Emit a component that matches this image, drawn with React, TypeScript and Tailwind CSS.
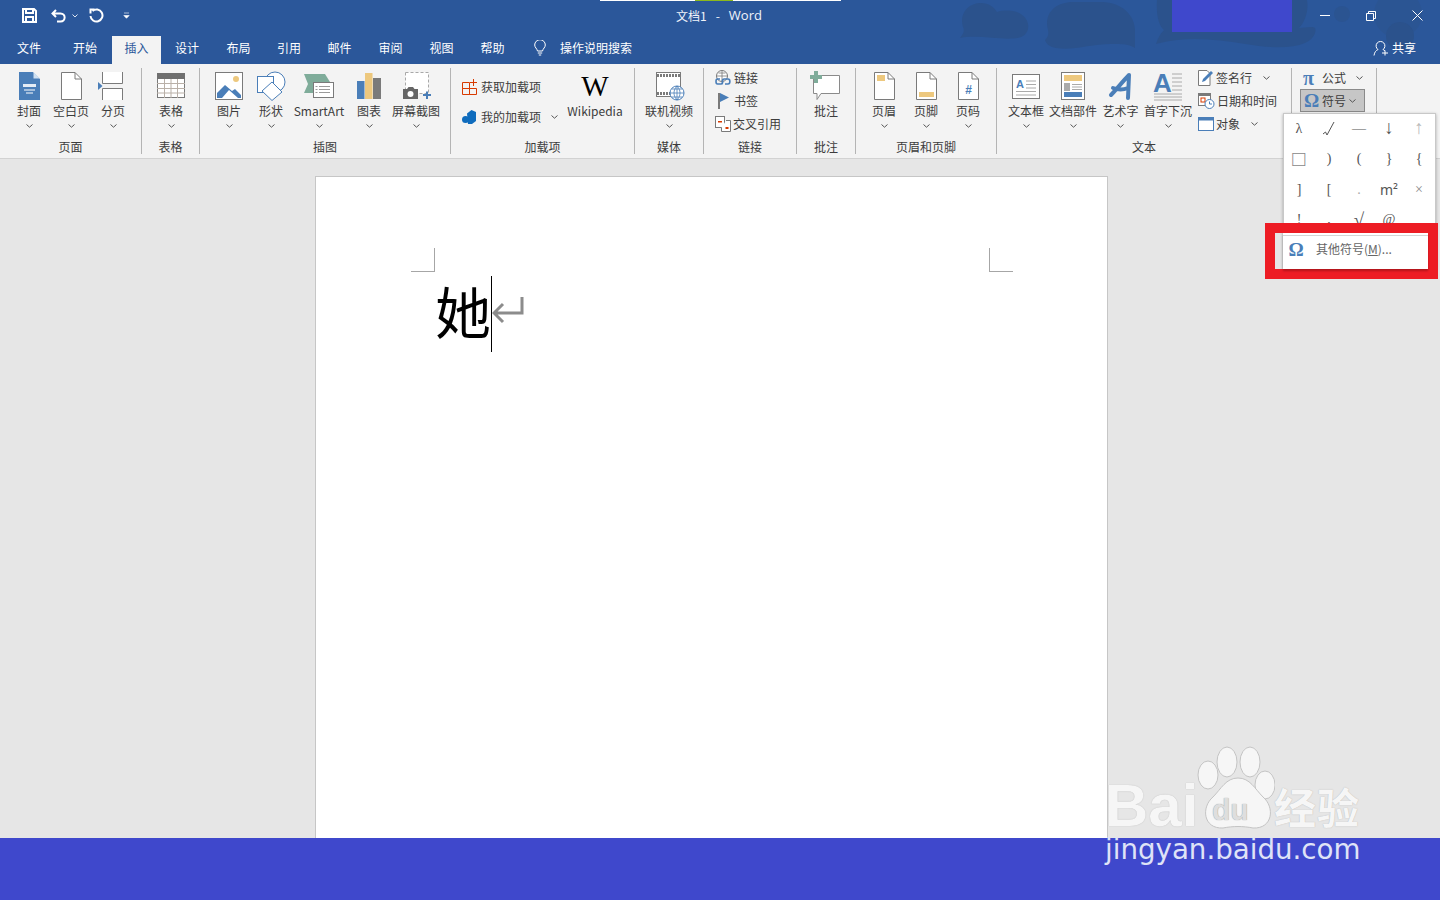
import type { ReactNode } from "react";

const font = { fontFamily: '"Noto Sans CJK SC", "Noto Sans", sans-serif' };
const serif = { fontFamily: '"Liberation Serif", serif' };
const arial = { fontFamily: '"Liberation Sans", sans-serif' };

const BLUE = "#4a7eb8";
const GRAY = "#7a7a7a";
const YEL = "#edc87e";

function Svg({ w, h, children }: { w: number; h: number; children: ReactNode }) {
    return (
        <svg width={w} height={h} viewBox={`0 0 ${w} ${h}`} className="shrink-0 block overflow-visible">
            {children}
        </svg>
    );
}

function Chevron({ className = "" }: { className?: string }) {
    return (
        <svg width="7" height="4" viewBox="0 0 7 4" className={`shrink-0 ${className}`}>
            <path d="M.5.5 3.5 3.2 6.5.5" fill="none" stroke="#555" strokeWidth="1" />
        </svg>
    );
}

function Doc({ children }: { children?: ReactNode }) {
    return (
        <Svg w={21} h={28}>
            <path d="M.5.5H14L20.5 7V27.5H.5Z" fill="#fff" stroke={GRAY} />
            <path d="M14 .5V7H20.5" fill="none" stroke={GRAY} />
            {children}
        </Svg>
    );
}

function BigButton({ w, label, icon, arrow = true }: { w: number; label: string; icon: ReactNode; arrow?: boolean }) {
    return (
        <div className="flex flex-col items-center shrink-0" style={{ width: w }}>
            <div className="h-[32px] flex items-center justify-center">{icon}</div>
            <div className="h-[16px] mt-[1px] leading-[16px] whitespace-nowrap">{label}</div>
            <div className="h-[14px] flex items-center">{arrow && <Chevron />}</div>
        </div>
    );
}

function Group({ w, label, pl = 0, children }: { w: number; label: string; pl?: number; children: ReactNode }) {
    return (
        <div className="h-[86px] shrink-0 flex flex-col border-r border-[#b4b4b4]" style={{ width: w }}>
            <div className="flex-1 flex pt-[2px]" style={{ paddingLeft: pl }}>
                {children}
            </div>
            <div className="h-[14px] leading-[14px] text-center whitespace-nowrap">{label}</div>
        </div>
    );
}

function SmallRow({ icon, label, arrow, gap = 3 }: { icon: ReactNode; label: string; arrow?: boolean; gap?: number }) {
    return (
        <div className="h-[20px] flex items-center whitespace-nowrap">
            <div className="w-[18px] flex justify-center shrink-0">{icon}</div>
            <span style={{ marginLeft: gap }}>{label}</span>
            {arrow && <Chevron className="ml-auto" />}
        </div>
    );
}

const tabs: [string, number][] = [
    ["文件", 58],
    ["开始", 54],
    ["插入", 49],
    ["设计", 52],
    ["布局", 51],
    ["引用", 50],
    ["邮件", 51],
    ["审阅", 51],
    ["视图", 51],
    ["帮助", 51],
];

const checkMark = (
    <svg width="14" height="16" viewBox="0 0 14 16">
        <path d="M1 14 3.500 12 5 15 12 2" fill="none" stroke="#555" strokeWidth="1" />
    </svg>
);

const symbols: { s: ReactNode; c?: string }[] = [
    { s: "λ" },
    { s: checkMark },
    { s: "—", c: "text-[#333]" },
    { s: "↓", c: "text-[#333] text-[19px]" },
    { s: "↑", c: "text-[#bbb] text-[19px]" },
    { s: "□", c: "text-[#888] text-[22px]" },
    { s: ")" },
    { s: "(" },
    { s: "}" },
    { s: "{" },
    { s: "]" },
    { s: "[" },
    { s: ".", c: "text-[#aaa]" },
    { s: "m²", c: "text-[14px] [font-family:'Noto_Sans',sans-serif]" },
    { s: "×", c: "text-[#888]" },
    { s: "!" },
    { s: "," },
    { s: "√", c: "text-[19px]" },
    { s: "@" },
    { s: "" },
];

export default function App() {
    return (
        <div className="w-[1440px] h-[900px] relative overflow-hidden flex flex-col text-[12px] text-[#3c3c3c] bg-[#e6e6e6]" style={font}>
            {/* title + tabs */}
            <div className="h-[64px] shrink-0 bg-[#2b579a] relative text-white">
                <svg width="1440" height="64" viewBox="0 0 1440 64" className="absolute inset-0">
                    <g fill="#2b528c">
                        <path d="M960 38c3-4 5-7 3-11-4-12 4-24 18-24 8 0 13 4 16 9 6-2 16-2 22 1 12 6 12 20 2 24-14 5-40-3-61 1Z" />
                        <path d="M1045 40c3-3 4-6 3-10-4-14 4-27 24-28h30c20 0 33 14 33 28l0 18c-6-4-12-4-24-4-20 0-38 7-55 4-6-1-10-4-11-8Z" />
                        <path d="M1156 44c2-6 4-10 8-14-6-5-8-18-7-30h150c2 10-2 22-8 28 4 0 14-2 16 0 2 4-2 12-10 15-14 6-36 5-60 1-30-5-60-8-89 0Z" />
                        <circle cx="1342" cy="14" r="8" fill="#2b5491" />
                        <circle cx="1398" cy="14" r="24" fill="#2b5593" />
                        <circle cx="1400" cy="36" r="14" />
                    </g>
                </svg>
                {/* colored strip left by the capture at the top */}
                <div className="absolute left-[600px] top-0 w-[241px] h-px bg-white" />
                <div className="absolute left-[695px] top-0 w-[38px] h-px bg-[#8cb81c]" />
                <div className="absolute left-[1172px] top-0 w-[120px] h-[32px] bg-[#3f48cc]" />

                <div className="h-[36px] flex items-center relative pb-[5px]">
                    <div className="w-[676px] shrink-0 flex items-center pl-[22px]">
                        <svg width="15" height="15" viewBox="0 0 15 15">
                            <path d="M1 1H12L14 3V14H1Z M4 1V5H11V1 M4 14V9H11V14" fill="none" stroke="#fff" strokeWidth="2" />
                        </svg>
                        <svg width="15" height="14" viewBox="0 0 15 14" className="ml-[14px]">
                            <path d="M5 1 1.500 4.500 5 8M2 4.500H9.500C15 4.500 15 12.500 9.500 12.500H6" fill="none" stroke="#fff" strokeWidth="2" />
                        </svg>
                        <svg width="6" height="4" viewBox="0 0 6 4" className="ml-[6px]">
                            <path d="M.5.5 3 3 5.500.5" fill="none" stroke="#dfe7f2" />
                        </svg>
                        <svg width="15" height="15" viewBox="0 0 15 15" className="ml-[11px]">
                            <path d="M3.500 3A6 6 0 1 1 1.500 8M1.500 5.500V1.500H5.500" fill="none" stroke="#fff" strokeWidth="2" />
                        </svg>
                        <svg width="7" height="7" viewBox="0 0 7 7" className="ml-[19px]">
                            <path d="M1 1H6M.8 3.500H6.200L3.500 6.300Z" fill="#fff" stroke="#fff" strokeWidth=".6" />
                        </svg>
                    </div>
                    <div className="flex items-center whitespace-nowrap text-[#f0f4fa]">
                        <span>文档1</span>
                        <span className="ml-[9px]">-</span>
                        <span className="ml-[9px] text-[13px]" style={{ fontFamily: '"Open Sans", sans-serif' }}>Word</span>
                    </div>
                    <div className="flex-1 flex items-center justify-end">
                        <div className="w-[46px] flex justify-center">
                            <div className="w-[10px] h-px bg-white" />
                        </div>
                        <div className="w-[46px] flex justify-center">
                            <svg width="10" height="10" viewBox="0 0 10 10">
                                <path d="M.5 2.500H7.500V9.500H.5ZM2.500 2.500V.5H9.500V7.500H7.500" fill="none" stroke="#fff" />
                            </svg>
                        </div>
                        <div className="w-[46px] flex justify-center">
                            <svg width="11" height="11" viewBox="0 0 11 11">
                                <path d="M.5.5 10.500 10.500M10.500.5.5 10.500" stroke="#fff" />
                            </svg>
                        </div>
                    </div>
                </div>

                <div className="h-[28px] flex relative">
                    {tabs.map(([t, w]) => (
                        <div
                            key={t}
                            style={{ width: w }}
                            className={`flex items-center justify-center pb-[4px] ${t === "插入" ? "bg-[#f3f3f3] text-[#2b579a]" : ""}`}
                        >
                            {t}
                        </div>
                    ))}
                    <div className="flex items-center pb-[4px] ml-[16px]">
                        <svg width="12" height="16" viewBox="0 0 12 16">
                            <path d="M3.500 11C3 8.500.7 7.500.7 5a5.300 5.300 0 0 1 10.600 0c0 2.500-2.300 3.500-2.800 6ZM3.800 13H8.200M4.800 15H7.200" fill="none" stroke="#fff" strokeWidth="1" />
                        </svg>
                        <span className="ml-[14px]">操作说明搜索</span>
                    </div>
                    <div className="ml-auto flex items-center pb-[4px] pr-[24px]">
                        <svg width="16" height="16" viewBox="0 0 16 16">
                            <path d="M1 15.500C1.500 12 3 10.500 5 9.500A4.400 4.400 0 1 1 10 9.500C10.800 9.900 11.500 10.300 12 11M9 13H15M12 10.500V15.500" fill="none" stroke="#fff" strokeWidth="1" />
                        </svg>
                        <span className="ml-[3px]">共享</span>
                    </div>
                </div>
            </div>

            {/* ribbon */}
            <div className="h-[95px] shrink-0 bg-[#f3f3f3] border-b border-[#d2d2d2] pt-[4px] flex">
                <Group w={142} label="页面" pl={8}>
                    <BigButton
                        w={42}
                        label="封面"
                        icon={
                            <Svg w={21} h={28}>
                                <path d="M0 0H14L21 7V28H0Z" fill={BLUE} />
                                <path d="M14.500 0V6.500H21" fill="#cfe0f1" />
                                <path d="M4 12H17V15H4Z" fill="#fff" opacity=".85" />
                                <path d="M5 18H16M7 21H14" stroke="#fff" />
                            </Svg>
                        }
                    />
                    <BigButton w={42} label="空白页" icon={<Doc />} />
                    <BigButton
                        w={42}
                        label="分页"
                        icon={
                            <div className="mr-[4px]">
                                <Svg w={26} h={28}>
                                    <path d="M4.500 0V11.500H24.500V0M4.500 28V16.500H24.500V28" fill="#fff" stroke={GRAY} />
                                    <path d="M0 10 4.500 14 0 18Z" fill={BLUE} />
                                </Svg>
                            </div>
                        }
                    />
                </Group>
                <Group w={58} label="表格" pl={8}>
                    <BigButton
                        w={42}
                        label="表格"
                        icon={
                            <Svg w={28} h={26}>
                                <rect x=".5" y=".5" width="27" height="24" fill="#fff" stroke={GRAY} />
                                <rect width="28" height="6" fill="#6f6f6f" />
                                <path d="M0 10.500H28M0 15.500H28M0 20H28M7.500 6V25M14 6V25M20.500 6V25" stroke="#b9b0a8" />
                            </Svg>
                        }
                    />
                </Group>
                <Group w={251} label="插图" pl={8}>
                    <BigButton
                        w={42}
                        label="图片"
                        icon={
                            <Svg w={28} h={28}>
                                <rect x=".5" y=".5" width="27" height="27" fill="#fff" stroke={GRAY} />
                                <circle cx="21" cy="7" r="3" fill={YEL} />
                                <path d="M2 26V21L10 13 17 19 20 17 26 23V26H23L14 18 7 26Z" fill={BLUE} />
                            </Svg>
                        }
                    />
                    <BigButton
                        w={42}
                        label="形状"
                        icon={
                            <Svg w={30} h={30}>
                                <circle cx="19" cy="11" r="10" fill="#fff" stroke={BLUE} />
                                <rect x="1.500" y="5.500" width="16" height="16" fill="#fff" stroke={BLUE} />
                                <path d="M16 11 26 21 16 29.500 6 20Z" fill="#fff" stroke={BLUE} />
                            </Svg>
                        }
                    />
                    <BigButton
                        w={54}
                        label="SmartArt"
                        icon={
                            <Svg w={30} h={24}>
                                <path d="M0 0H21L26 8H12L9 11 12 19H0L4 10Z" fill="#7fac9a" />
                                <rect x="9.500" y="8.500" width="20" height="15" fill="#fff" stroke={GRAY} />
                                <path d="M15 12.500H26M15 15.500H26M15 18.500H26M11.500 12.500H13.500M11.500 15.500H13.500M11.500 18.500H13.500" stroke="#9a9a9a" />
                            </Svg>
                        }
                    />
                    <BigButton
                        w={46}
                        label="图表"
                        icon={
                            <Svg w={24} h={26}>
                                <rect y="8" width="7.500" height="18" fill={BLUE} />
                                <rect x="8" width="7.500" height="26" fill={YEL} />
                                <rect x="16" y="5" width="8" height="21" fill={GRAY} />
                            </Svg>
                        }
                    />
                    <BigButton
                        w={48}
                        label="屏幕截图"
                        icon={
                            <Svg w={29} h={28}>
                                <rect x="3.500" y=".5" width="23" height="21" fill="#fff" stroke="#a8a8a8" strokeDasharray="3 2" />
                                <path d="M1 17H5L6.500 15H11L12.500 17H16V27H1Z" fill="#666" />
                                <circle cx="8.500" cy="22" r="3" fill="#fff" />
                                <path d="M21 23H29M25 19.500V27" stroke={BLUE} strokeWidth="2" />
                            </Svg>
                        }
                    />
                </Group>
                <Group w={184} label="加载项">
                    <div className="w-[108px] shrink-0 pl-[9px] flex flex-col gap-[10px] pt-[7px]">
                        <SmallRow
                            gap={3}
                            label="获取加载项"
                            icon={
                                <Svg w={15} h={16}>
                                    <path d="M.5 3.500H7.500V9.500H.5ZM.5 9.500H7.500V15.500H.5ZM7.500 9.500H14.500V15.500H7.500ZM8 3.500H15M11.500 0V7" fill="none" stroke="#d83b01" />
                                </Svg>
                            }
                        />
                        <div className="h-[20px] flex items-center whitespace-nowrap">
                            <div className="w-[18px] flex justify-center shrink-0">
                                <Svg w={15} h={14}>
                                    <path d="M5 3.500 9.500 0 14 2V11L10 14H6Z" fill="#0f6cbd" />
                                    <circle cx="3.500" cy="9.500" r="3.500" fill="#0f6cbd" />
                                </Svg>
                            </div>
                            <span className="ml-[3px]">我的加载项</span>
                            <Chevron className="ml-[10px]" />
                        </div>
                    </div>
                    <div className="flex-1">
                        <BigButton
                            w={72}
                            label="Wikipedia"
                            arrow={false}
                            icon={<span className="text-[29px] leading-[32px] text-black" style={serif}>W</span>}
                        />
                    </div>
                </Group>
                <Group w={69} label="媒体" pl={8}>
                    <BigButton
                        w={52}
                        label="联机视频"
                        icon={
                            <div className="ml-[2px]">
                                <Svg w={29} h={29}>
                                    <rect x=".5" y=".5" width="24" height="24" fill="#fff" stroke={GRAY} />
                                    <path d="M1 3.500H24M1 21.500H24" stroke={GRAY} strokeWidth="3" strokeDasharray="2 1" />
                                    <circle cx="21" cy="21" r="7" fill="#fff" stroke={BLUE} />
                                    <path d="M14 21H28M21 14V28M16 17H26M16 25H26M21 14C17 18 17 24 21 28M21 14C25 18 25 24 21 28" fill="none" stroke={BLUE} strokeWidth=".8" />
                                </Svg>
                            </div>
                        }
                    />
                </Group>
                <Group w={93} label="链接" pl={10}>
                    <div className="flex flex-col gap-[3px] w-full -mt-[2px]">
                        <SmallRow
                            gap={2}
                            label="链接"
                            icon={
                                <Svg w={16} h={16}>
                                    <circle cx="7" cy="6" r="5.500" fill="#fff" stroke={GRAY} />
                                    <path d="M1.500 6H12.500M7 .5V11.500M3.500 3H10.500" stroke={GRAY} strokeWidth=".8" />
                                    <path d="M5 9H2.500C.5 9 .5 14 2.500 14H6C8 14 8 11 7 11M10 14H13C15.500 14 15.500 9 13 9H9C7 9 7 12 8 12" fill="none" stroke={BLUE} strokeWidth="1.600" />
                                </Svg>
                            }
                        />
                        <SmallRow
                            gap={2}
                            label="书签"
                            icon={
                                <Svg w={13} h={16}>
                                    <rect x="1" width="2" height="16" fill={GRAY} />
                                    <path d="M3 0 12 4.500 3 9Z" fill={BLUE} />
                                </Svg>
                            }
                        />
                        <SmallRow
                            gap={1}
                            label="交叉引用"
                            icon={
                                <Svg w={17} h={16}>
                                    <rect x=".5" y=".5" width="9" height="11" fill="#fff" stroke={GRAY} />
                                    <path d="M11 4.500H15.500V15.500H6.500V12" fill="#fff" stroke={GRAY} />
                                    <rect x="3" y="5" width="4" height="1.500" fill="#d83b01" />
                                    <rect x="10.500" y="11" width="3" height="2" fill="#d83b01" />
                                </Svg>
                            }
                        />
                    </div>
                </Group>
                <Group w={59} label="批注" pl={5}>
                    <BigButton
                        w={48}
                        label="批注"
                        arrow={false}
                        icon={
                            <div className="mr-[4px]">
                                <Svg w={31} h={30}>
                                    <path d="M4.500 4.500H30.500V22.500H12L8 28.500V22.500H4.500Z" fill="#fff" stroke="#8a8a8a" strokeLinejoin="round" />
                                    <path d="M5 0H9V4H13V8H9V12H5V8H1V4H5Z" fill="#7fac9a" />
                                </Svg>
                            </div>
                        }
                    />
                </Group>
                <Group w={141} label="页眉和页脚" pl={7}>
                    <BigButton
                        w={42}
                        label="页眉"
                        icon={
                            <Doc>
                                <rect x="3" y="3" width="8" height="6" fill={YEL} />
                            </Doc>
                        }
                    />
                    <BigButton
                        w={42}
                        label="页脚"
                        icon={
                            <Doc>
                                <rect x="3" y="20" width="15" height="5" fill={YEL} />
                            </Doc>
                        }
                    />
                    <BigButton
                        w={42}
                        label="页码"
                        icon={
                            <Doc>
                                <text x="10.500" y="22" textAnchor="middle" fontSize="12" fontWeight="700" fill={BLUE} style={arial}>
                                    #
                                </text>
                            </Doc>
                        }
                    />
                </Group>
                <Group w={295} label="文本" pl={6}>
                    <BigButton
                        w={46}
                        label="文本框"
                        icon={
                            <Svg w={28} h={25}>
                                <rect x=".5" y=".5" width="27" height="24" fill="#fff" stroke={GRAY} />
                                <text x="4" y="14" fontSize="11" fontWeight="700" fill={BLUE} style={arial}>
                                    A
                                </text>
                                <path d="M14 7H24M14 10.500H24M14 14H24M4 17.500H24M4 21H24" stroke="#aaa" />
                            </Svg>
                        }
                    />
                    <BigButton
                        w={48}
                        label="文档部件"
                        icon={
                            <Svg w={24} h={28}>
                                <rect x=".5" y=".5" width="23" height="27" fill="#fff" stroke={GRAY} />
                                <rect x="3" y="3" width="18" height="6" fill={YEL} />
                                <rect x="3" y="11" width="6" height="8" fill="#aaa" />
                                <path d="M11 12.500H21M11 15H21M11 17.500H21" stroke="#aaa" />
                                <rect x="3" y="20" width="18" height="5" fill={BLUE} />
                            </Svg>
                        }
                    />
                    <BigButton
                        w={47}
                        label="艺术字"
                        icon={
                            <Svg w={24} h={28}>
                                <path d="M2 23C7 18 14 9 20 3M20 3 19 26M4 16C9 18 14 18 19 16" fill="none" stroke={BLUE} strokeWidth="4" strokeLinecap="round" />
                            </Svg>
                        }
                    />
                    <BigButton
                        w={48}
                        label="首字下沉"
                        icon={
                            <Svg w={30} h={30}>
                                <text x="0" y="21" fontSize="26" fontWeight="700" fill={BLUE} style={arial}>
                                    A
                                </text>
                                <path d="M19 3H29M19 7H29M19 11H29M19 15H29M19 19H29M1 23H29M1 26H29M1 29H29" stroke="#aaa" />
                            </Svg>
                        }
                    />
                    <div className="w-[84px] shrink-0 ml-[5px] flex flex-col gap-[3px] -mt-[2px]">
                        <div className="w-[73px]">
                            <SmallRow
                                gap={1}
                                label="签名行"
                                arrow
                                icon={
                                    <Svg w={16} h={16}>
                                        <path d="M.5.5H9L12 3.500V15.500H.5Z" fill="#fff" stroke={GRAY} />
                                        <path d="M4 12 5 9 13 1 15 3 7 11Z" fill={BLUE} />
                                    </Svg>
                                }
                            />
                        </div>
                        <SmallRow
                            gap={2}
                            label="日期和时间"
                            icon={
                                <Svg w={17} h={16}>
                                    <rect x=".5" y=".5" width="12" height="12" fill="#fff" stroke={GRAY} />
                                    <rect width="13" height="3" fill={GRAY} />
                                    <rect x="3" y="5" width="4" height="4" fill="none" stroke="#d83b01" />
                                    <circle cx="11.500" cy="11" r="4.500" fill="#fff" stroke={BLUE} />
                                    <path d="M11.500 8.500V11H14" fill="none" stroke={BLUE} />
                                </Svg>
                            }
                        />
                        <div className="w-[61px]">
                            <SmallRow
                                gap={1}
                                label="对象"
                                arrow
                                icon={
                                    <Svg w={16} h={14}>
                                        <rect x=".5" y=".5" width="15" height="13" fill="#fff" stroke={BLUE} />
                                        <rect width="16" height="3.500" fill={BLUE} />
                                    </Svg>
                                }
                            />
                        </div>
                    </div>
                </Group>
                <Group w={85} label="" pl={8}>
                    <div className="flex flex-col gap-[3px] w-[65px] -mt-[2px]">
                        <div className="h-[20px] flex items-center pl-[3px] pr-[2px]">
                            <span className="w-[15px] text-[20px] font-bold text-[#4a7eb8] leading-none" style={serif}>π</span>
                            <span className="ml-[4px]">公式</span>
                            <Chevron className="ml-auto" />
                        </div>
                        <div className="h-[23px] -mt-[2px] flex items-center pl-[3px] pr-[8px] bg-[#c6c6c6] border border-[#8a8a8a]">
                            <span className="w-[15px] text-[19px] font-bold text-[#4a7eb8] leading-none" style={serif}>Ω</span>
                            <span className="ml-[3px]">符号</span>
                            <Chevron className="ml-auto" />
                        </div>
                    </div>
                </Group>
            </div>

            {/* document area */}
            <div className="flex-1 min-h-0 flex pl-[315px] pt-[17px] overflow-hidden">
                <div className="w-[793px] h-full bg-white border-x border-t border-[#c6c6c6] pt-[71px] pl-[95px] pr-[94px]">
                    <div className="flex justify-between">
                        <div className="w-[24px] h-[24px] border-r border-b border-[#a6a6a6]" />
                        <div className="w-[24px] h-[24px] border-l border-b border-[#a6a6a6]" />
                    </div>
                    <div className="flex items-center pl-[24px] mt-[4px] h-[76px]">
                        <span className="text-[56px] leading-none text-black w-[56px] -mt-[9px]">她</span>
                        <div className="w-px h-[76px] bg-black" />
                        <svg width="32" height="28" viewBox="0 0 32 28" className="-mt-[8px]">
                            <path d="M30 1V17H3M11 8 2 17 11 26" fill="none" stroke="#8c8c8c" strokeWidth="3" />
                        </svg>
                    </div>
                </div>
            </div>
            <div className="h-[62px] shrink-0 bg-[#3f48cc]" />

            {/* symbol dropdown */}
            <div className="absolute left-[1283px] top-[113px] w-[153px] h-[156px] bg-white border border-[#c8c8c8] shadow-[0_1px_3px_rgba(0,0,0,0.3)]">
                <div className="grid grid-cols-5 w-[150px] -mt-[1px]" style={{ fontFamily: '"Liberation Serif", "DejaVu Sans", serif' }}>
                    {symbols.map((it, i) => (
                        <div key={i} className={`h-[30.5px] flex items-center justify-center text-[#555] text-[14px] ${it.c ?? ""}`}>
                            {it.s}
                        </div>
                    ))}
                </div>
            </div>

            {/* red highlight box with the menu item inside */}
            <div className="absolute left-[1265px] top-[223px] w-[173px] h-[56px] border-[10px] border-[#ed1c24]">
                <div className="ml-[8px] h-full bg-white shadow-[0_2px_2px_rgba(0,0,0,0.25)]">
                    <div className="h-[3px] border-b border-[#d4d4d4]" />
                    <div className="flex items-center h-[26px] text-[#666]">
                        <span className="w-[26px] text-center text-[19px] font-bold text-[#4a7eb8] leading-none" style={serif}>Ω</span>
                        <span className="ml-[7px] text-[12px]">
                            其他符号(<span className="underline">M</span>)...
                        </span>
                    </div>
                </div>
            </div>

            {/* watermark */}
            <div className="absolute left-[1105px] top-[745px] w-[270px] h-[130px] pointer-events-none">
                <div className="absolute left-[0px] top-[39px] text-[60px] leading-[44px] font-bold text-[#f6f6f6] [text-shadow:0_0_1px_#aaa] whitespace-nowrap" style={arial}>
                    Bai
                </div>
                <svg width="100" height="90" viewBox="0 0 100 90" className="absolute left-[70px] top-0">
                    <g fill="#f6f6f6" stroke="#c4c4c4">
                        <ellipse cx="33" cy="30" rx="10" ry="14" />
                        <ellipse cx="52" cy="17" rx="10" ry="15" />
                        <ellipse cx="75" cy="17" rx="10" ry="15" />
                        <ellipse cx="90" cy="40" rx="10" ry="14" />
                        <path d="M63 33C75 33 80 44 88 52 100 62 98 84 78 83 68 81 58 81 48 83 28 84 26 62 38 52 46 44 51 33 63 33Z" />
                    </g>
                </svg>
                <div className="absolute left-[107px] top-[50px] text-[30px] leading-[30px] font-bold text-[#dedede] [text-shadow:0_0_1px_#888]" style={arial}>
                    du
                </div>
                <div className="absolute left-[169px] top-[37px] text-[42px] leading-[48px] font-bold tracking-[1px] text-[#f6f6f6] [text-shadow:0_0_1px_#aaa] whitespace-nowrap">
                    经验
                </div>
                <div className="absolute left-[0px] top-[88px] text-[27.7px] leading-[34px] text-[#dfe3f7] whitespace-nowrap" style={{ fontFamily: '"DejaVu Sans", sans-serif' }}>
                    jingyan.baidu.com
                </div>
            </div>
        </div>
    );
}
